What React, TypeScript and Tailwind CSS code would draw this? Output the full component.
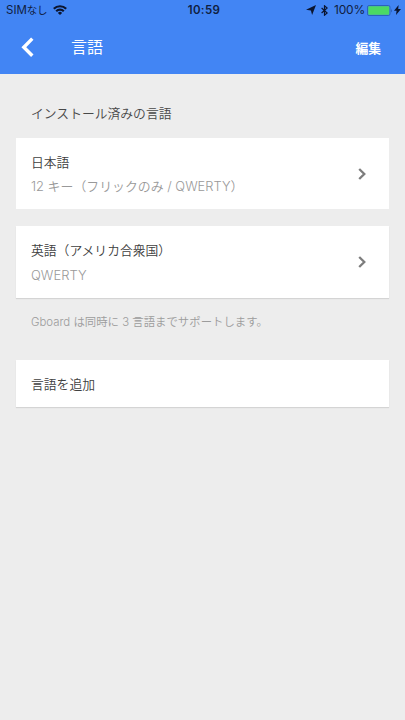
import type { ReactNode } from 'react';

function Chevron() {
  return (
    <svg className="h-4 w-4 shrink-0" viewBox="0 0 16 16" fill="none" stroke="#7d7d7d" strokeWidth="2.3">
      <path d="M5.2 3 10.3 8 5.2 13" />
    </svg>
  );
}

function StatusBar() {
  return (
    <div className="grid h-5 grid-cols-3 items-center pl-1.5 pr-1 text-[#10203f]">
      <div className="flex items-center gap-[6px]">
        <span className="h-5 text-[11.5px] leading-5">
          SIM<span className="text-[10.5px] tracking-[-0.3px]">なし</span>
        </span>
        <svg className="h-[10px] w-[14px]" viewBox="0 0 14 10" fill="none" stroke="#0b1530" strokeWidth="2.2">
          <path d="M.8 3.8a8.8 8.8 0 0 1 12.4 0" />
          <path d="M3.2 6.2a5.4 5.4 0 0 1 7.6 0" />
          <path d="M7 10 4.9 7.9a3 3 0 0 1 4.2 0Z" fill="#0b1530" stroke="none" />
        </svg>
      </div>
      <div className="pl-px text-center text-[11.5px] font-semibold leading-5 tracking-[0.4px]">10:59</div>
      <div className="flex items-center justify-end">
        <svg className="mr-[5px] h-[10px] w-[10px] shrink-0" viewBox="0 0 9 9" fill="#0b1530">
          <path d="M9 0 5.5 9 4.4 4.9 0 4.2Z" />
        </svg>
        <svg className="mr-[6px] h-[11px] w-[7px] shrink-0" viewBox="0 0 7 11" fill="none" stroke="#0b1530" strokeWidth="1.2">
          <path d="M.6 3 6.2 8 3.5 10.2V.8L6.2 3 .6 8" />
        </svg>
        <span className="text-[12px] leading-5 tracking-[-0.2px]">100%</span>
        <svg className="ml-[2px] h-[11px] w-[26px] shrink-0" viewBox="0 0 26 11">
          <rect x=".5" y=".5" width="22.5" height="10" rx="1.6" fill="#4585e8" stroke="#2b62bb" />
          <rect x="1.3" y="1.3" width="20.9" height="8.4" rx=".8" fill="#4bd964" />
          <path d="M24.2 3.5q1.4 2 0 4Z" fill="#2455a8" />
        </svg>
        <svg className="ml-px h-[10px] w-[7px] shrink-0" viewBox="0 0 7 10" fill="#0b1530">
          <path d="M4.6 0 0 5.8h2.6L2 10l5-6.1H4.2Z" />
        </svg>
      </div>
    </div>
  );
}

function Card({ className, children }: { className: string; children: ReactNode }) {
  return (
    <button
      className={`flex w-full items-center justify-between bg-white pl-[15px] pr-[19px] text-left text-[#404040] ${className}`}
    >
      {children}
    </button>
  );
}

export default function App() {
  return (
    <div className="h-[720px] w-[405px] overflow-hidden bg-[#ededed] font-['Inter','Noto_Sans_CJK_JP',sans-serif]">
      <header className="h-[74px] bg-[#4285f4]">
        <StatusBar />
        <div className="flex h-[54px] items-center pl-5 pr-6 text-white">
          <svg className="h-5 w-[15px]" viewBox="0 0 15 20" fill="none" stroke="white" strokeWidth="3.4">
            <path d="M12.3 1.6 3.8 10.2l8.5 8.6" />
          </svg>
          <h1 className="ml-9 text-[16px] leading-6">言語</h1>
          <button className="ml-auto mt-[3px] text-[12.8px] font-bold leading-5">編集</button>
        </div>
      </header>
      <main className="px-4">
        <h2 className="mt-[30px] pl-[15px] text-[12.8px] font-[350] leading-5 text-[#484848]">インストール済みの言語</h2>
        <Card className="mt-[14px] h-[71px]">
          <div className="pt-[2px] font-[350]">
            <div className="text-[12.8px] leading-6">日本語</div>
            <div className="whitespace-nowrap text-[12.9px] leading-6 text-[#999]">12 キー（フリックのみ / QWERTY）</div>
          </div>
          <Chevron />
        </Card>
        <Card className="mt-[17px] h-[72px] shadow-[0_1px_1px_rgba(0,0,0,0.1)]">
          <div className="pt-px font-[350]">
            <div className="text-[12.8px] leading-6">英語（アメリカ合衆国）</div>
            <div className="text-[13px] leading-6 text-[#999]">QWERTY</div>
          </div>
          <Chevron />
        </Card>
        <p className="mt-[14px] whitespace-nowrap pl-[15px] text-[11.4px] font-[350] leading-5 text-[#9c9c9c]">
          Gboard は同時に 3 言語までサポートします。
        </p>
        <Card className="mt-[28px] h-[47px] pt-[2px] shadow-[0_1px_1px_rgba(0,0,0,0.1)]">
          <span className="text-[12.8px] font-[350] leading-6">言語を追加</span>
        </Card>
      </main>
    </div>
  );
}
